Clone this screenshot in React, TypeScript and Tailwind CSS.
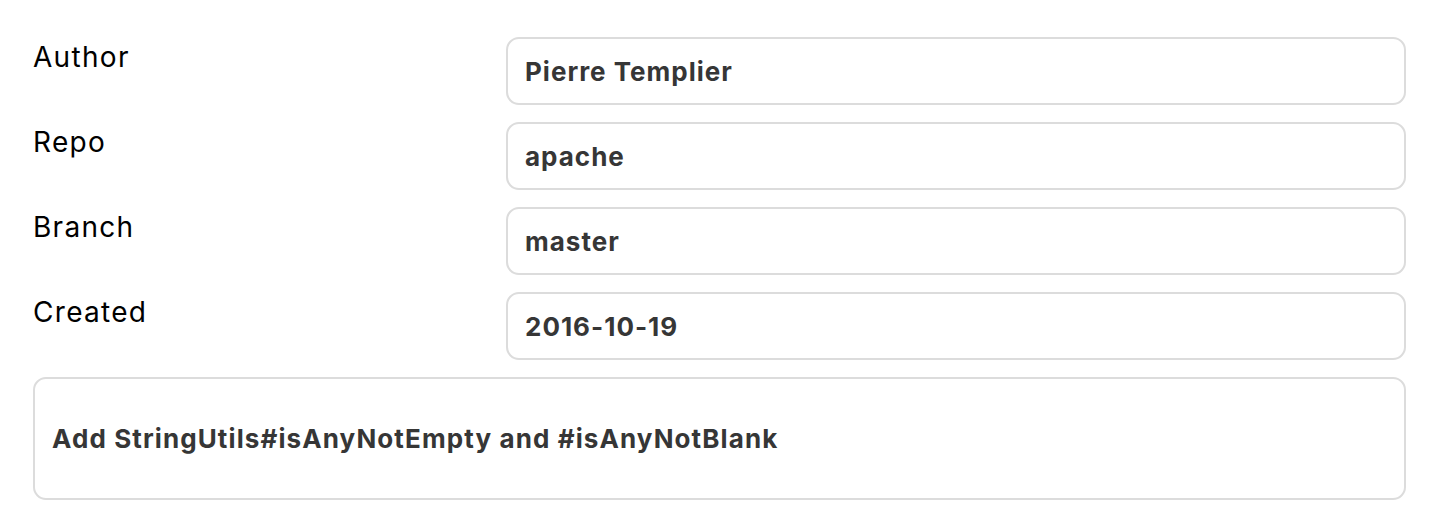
import React from 'react'

const fields = [
  { label: 'Author', value: 'Pierre Templier' },
  { label: 'Repo', value: 'apache' },
  { label: 'Branch', value: 'master' },
  { label: 'Created', value: '2016-10-19' }
]

function FieldRow({ label, value }: { label: string; value: string }) {
  return (
    <div className="flex items-start">
      <div className="w-[473px] shrink-0 pt-[3px] text-[28px] leading-[34px] tracking-[1.3px] text-black">
        {label}
      </div>
      <div className="flex h-[68px] flex-1 items-center rounded-[13px] border-2 border-[#dcdcdc] px-[17px] text-[26px] font-bold tracking-[1px] text-[#363636]">
        {value}
      </div>
    </div>
  )
}

export default function App() {
  return (
    <div
      className="flex h-[532px] w-[1440px] flex-col gap-[17px] bg-white pl-[33px] pr-[34px] pt-[37px]"
      style={{ fontFamily: 'Inter, "Noto Sans", sans-serif' }}
    >
      {fields.map(f => (
        <FieldRow key={f.label} label={f.label} value={f.value} />
      ))}
      <div className="flex h-[123px] items-center rounded-[13px] border-2 border-[#dcdcdc] px-[17px] text-[26px] font-bold tracking-[1.1px] text-[#363636]">
        Add StringUtils#isAnyNotEmpty and #isAnyNotBlank
      </div>
    </div>
  )
}
